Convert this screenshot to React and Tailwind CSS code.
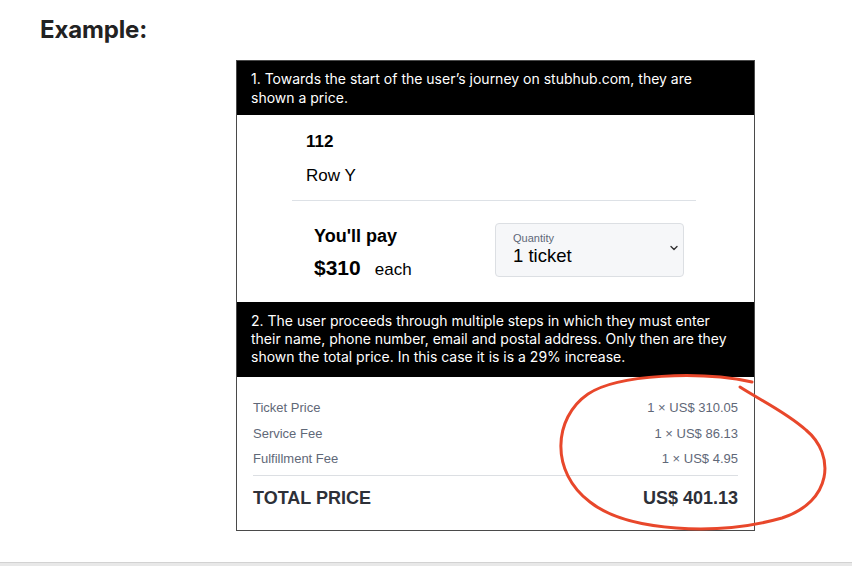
import React from 'react';

const FEES = [
  { label: 'Ticket Price', value: '1 × US$ 310.05' },
  { label: 'Service Fee', value: '1 × US$ 86.13' },
  { label: 'Fulfillment Fee', value: '1 × US$ 4.95' },
];

function Chevron() {
  return (
    <svg width="8" height="6" viewBox="0 0 8 6" fill="none">
      <path d="M1 1.5 L4 4.5 L7 1.5" stroke="#333" strokeWidth="1.4" strokeLinecap="round" strokeLinejoin="round" />
    </svg>
  );
}

export default function App() {
  return (
    <div className="relative w-[852px] h-[566px] bg-white overflow-hidden flex flex-col font-['Inter',sans-serif]">
      {/* heading */}
      <h2 className="pl-10 pt-[16px] text-[24px] leading-[28px] font-bold text-[#222] tracking-[-0.15px]">Example:</h2>

      {/* card */}
      <div className="ml-[236px] mt-[16px] w-[519px] border border-[#4a4a4a] bg-white">
        {/* step 1 */}
        <div className="h-[54px] bg-black text-white pl-[14px] pr-[45px] pt-[9px] text-[14px] leading-[18.5px]">
          1. Towards the start of the user’s journey on stubhub.com, they are shown a price.
        </div>

        <div className="h-[187px] font-['Liberation_Sans',Arial,sans-serif] text-black">
          <div className="pl-[69px] pt-[17px]">
            <div className="text-[17px] leading-[20px] font-bold">112</div>
            <div className="mt-[14px] text-[17px] leading-[20px]">Row Y</div>
          </div>
          <div className="ml-[55px] mt-[14px] w-[404px] h-px bg-[#dde1e6]" />
          <div className="ml-[77px] mt-[22px] flex items-start">
            <div className="w-[181px] pt-[2px]">
              <div className="text-[18px] leading-[22px] font-bold">You'll pay</div>
              <div className="mt-[9px] flex items-baseline gap-[14px]">
                <span className="text-[21px] leading-[24px] font-bold">$310</span>
                <span className="text-[17px] leading-[24px]">each</span>
              </div>
            </div>
            <div className="w-[189px] h-[54px] rounded-[4px] border border-[#dcdfe3] bg-[#f6f7f9] flex items-center justify-between pl-[17px] pr-[5px]">
              <div className="-mt-[2px]">
                <div className="text-[11px] leading-[13px] text-[#5f6878]">Quantity</div>
                <div className="text-[18.5px] leading-[22px] text-black">1 ticket</div>
              </div>
              <div className="-mt-[4px]">
                <Chevron />
              </div>
            </div>
          </div>
        </div>

        {/* step 2 */}
        <div className="h-[75px] bg-black text-white px-[14px] pt-[10px] text-[14px] leading-[18px]">
          2. The user proceeds through multiple steps in which they must enter their name, phone number, email and postal address. Only then are they shown the total price. In this case it is is a 29% increase.
        </div>

        <div className="h-[153px] px-4 pt-[18px] font-['Liberation_Sans',Arial,sans-serif]">
          {FEES.map(({ label, value }) => (
            <div key={label} className="h-[25.5px] flex items-center justify-between text-[13px] text-[#5f6878]">
              <span>{label}</span>
              <span>{value}</span>
            </div>
          ))}
          <div className="mt-[3px] h-px bg-[#dcdfe3]" />
          <div className="mt-[11px] h-[24px] flex items-center justify-between text-[18px] font-bold text-[#2d3038]">
            <span>TOTAL PRICE</span>
            <span>US$ 401.13</span>
          </div>
        </div>
      </div>

      <div className="mt-auto h-[4px] border-t border-[#d2d2d2] bg-[#e8e8e8]" />

      {/* hand-drawn red circle */}
      <svg className="absolute inset-0 pointer-events-none" width="852" height="566" viewBox="0 0 852 566" fill="none">
        <path
          d="M752 382 C700 371 618 374 588 394 C553 418 550 472 590 502 C628 532 718 536 782 518 C832 502 836 455 806 430 C786 412 760 400 740 387"
          stroke="#e8472b"
          strokeWidth="3"
          strokeLinecap="round"
        />
      </svg>
    </div>
  );
}
